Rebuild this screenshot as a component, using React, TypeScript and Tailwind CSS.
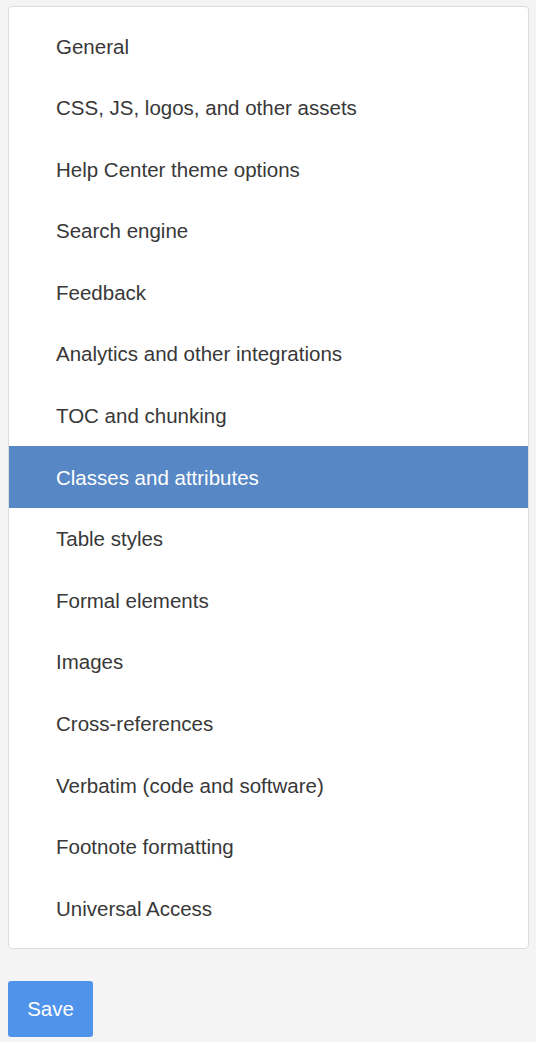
import React from "react";

const items = [
  "General",
  "CSS, JS, logos, and other assets",
  "Help Center theme options",
  "Search engine",
  "Feedback",
  "Analytics and other integrations",
  "TOC and chunking",
  "Classes and attributes",
  "Table styles",
  "Formal elements",
  "Images",
  "Cross-references",
  "Verbatim (code and software)",
  "Footnote formatting",
  "Universal Access",
];

export default function App() {
  return (
    <div
      className="min-h-[1042px] w-[536px] bg-[#f4f4f4] pt-[6px] px-[8px]"
      style={{ fontFamily: '"Liberation Sans", Arial, sans-serif' }}
    >
      <div className="w-[521px] rounded-[4px] border border-[#dcdcdc] bg-white pt-[8px] pb-[9px]">
        {items.map((it) => {
          const active = it === "Classes and attributes";
          return (
            <div
              key={it}
              className={`h-[61.6px] flex items-center pl-[47px] pt-[2px] text-[20.5px] leading-[1.2] ${
                active ? "bg-[#5787c5] text-white" : "text-[#383838]"
              }`}
            >
              {it}
            </div>
          );
        })}
      </div>
      <button className="mt-[32px] h-[56px] w-[85px] rounded-[3px] bg-[#5093eb] text-[20.5px] text-white">
        Save
      </button>
    </div>
  );
}
